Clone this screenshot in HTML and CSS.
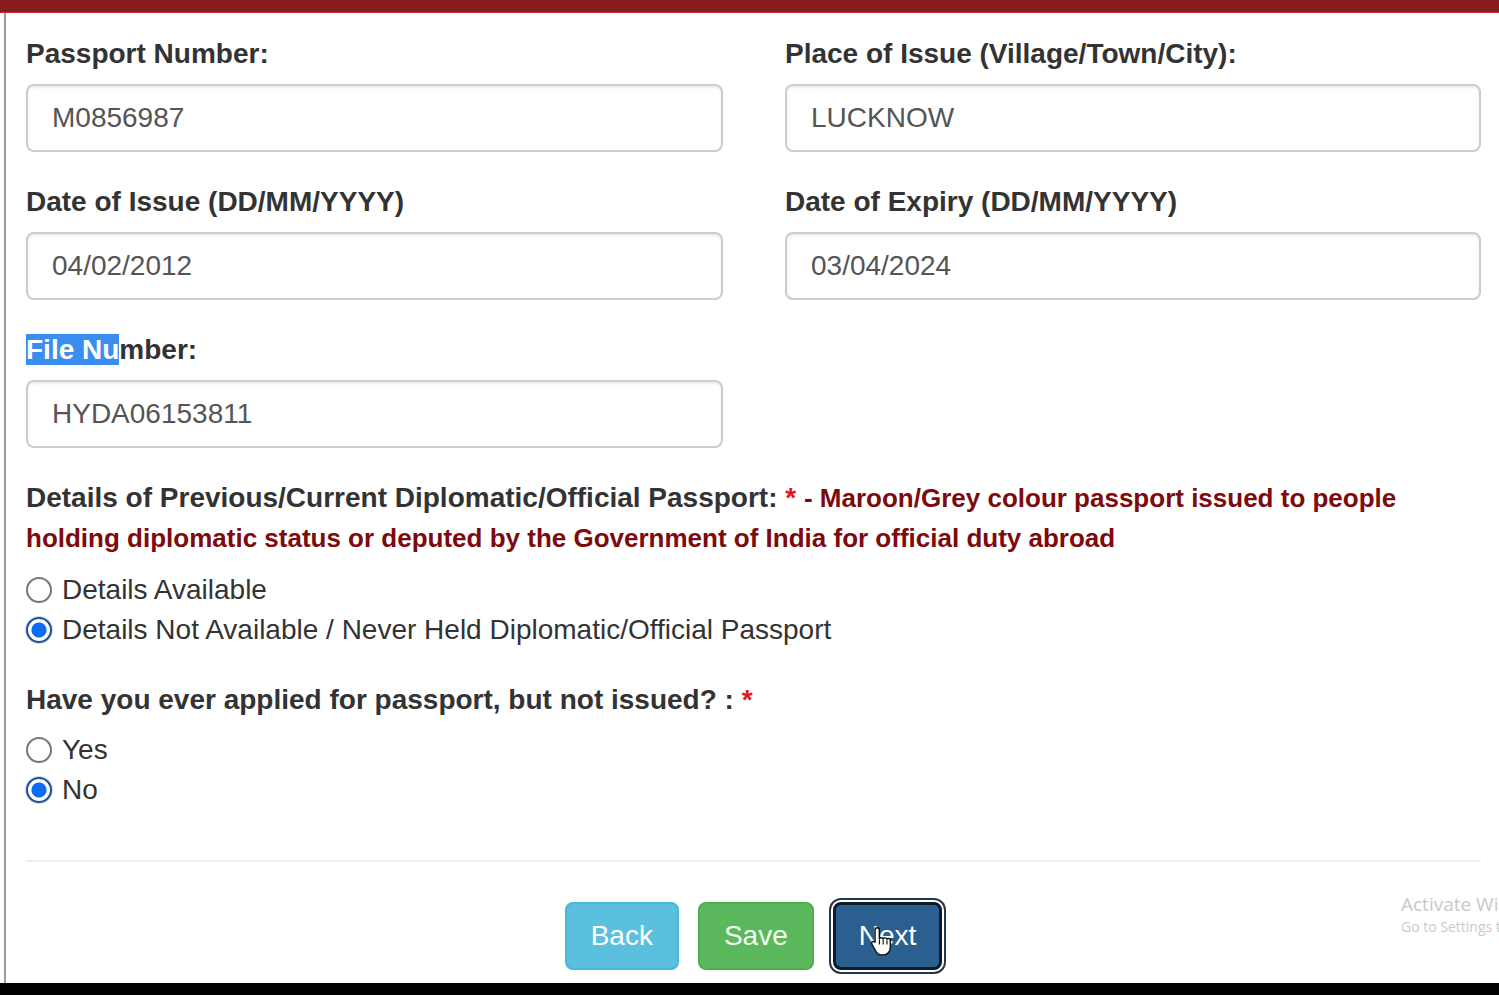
FILE: index.html
```html
<!DOCTYPE html>
<html lang="en">
<head>
<meta charset="utf-8">
<title>Passport Details</title>
<link rel="stylesheet" href="styles.css">
</head>
<body>
<div class="topbar"></div>
<main class="main">
  <div class="grid">
    <div class="group">
      <label class="lbl">Passport Number:</label>
      <div class="input">M0856987</div>
    </div>
    <div class="group">
      <label class="lbl">Place of Issue (Village/Town/City):</label>
      <div class="input">LUCKNOW</div>
    </div>
    <div class="group">
      <label class="lbl">Date of Issue (DD/MM/YYYY)</label>
      <div class="input">04/02/2012</div>
    </div>
    <div class="group">
      <label class="lbl">Date of Expiry (DD/MM/YYYY)</label>
      <div class="input">03/04/2024</div>
    </div>
    <div class="group">
      <label class="lbl"><span class="sel">File Nu</span>mber:</label>
      <div class="input">HYDA06153811</div>
    </div>
  </div>

  <p class="question">Details of Previous/Current Diplomatic/Official Passport: <span class="req">*</span> <span class="note">- Maroon/Grey colour passport issued to people holding diplomatic status or deputed by the Government of India for official duty abroad</span></p>
  <div class="radios first">
    <label class="radio"><span class="dot"></span>Details Available</label>
    <label class="radio"><span class="dot on"></span>Details Not Available / Never Held Diplomatic/Official Passport</label>
  </div>

  <p class="question q2">Have you ever applied for passport, but not issued? : <span class="req">*</span></p>
  <div class="radios">
    <label class="radio"><span class="dot"></span>Yes</label>
    <label class="radio"><span class="dot on"></span>No</label>
  </div>

  <hr class="rule">

  <div class="actions">
    <button class="btn back">Back</button>
    <button class="btn save">Save</button>
    <button class="btn next">Next</button>
  </div>

  <div class="watermark">
    <div class="wm1">Activate Windows</div>
    <div class="wm2">Go to Settings to activate Windows.</div>
  </div>

  <svg class="cursor" width="22" height="30" viewBox="0 0 17 23" aria-hidden="true">
    <path d="M5.5 1.2c1 0 1.7.8 1.7 1.8v6.6c.2-.9 2.8-.9 3 .2.3-1 2.7-1 2.9.3.4-.9 2.6-.7 2.6.7v5.4c0 3.2-2 6-5 6H8.3c-1.6 0-2.6-.8-3.4-2.2L1.5 14c-.8-1.3.5-2.8 1.9-1.9l.4.3.1.1V3c0-1 .7-1.8 1.6-1.8z" fill="#fff" stroke="#111" stroke-width="1.1" stroke-linejoin="round"/>
    <path d="M7.3 10.2v4M10.2 10.4v3.8M13.1 10.9v3.4" stroke="#111" stroke-width="0.9" fill="none"/>
  </svg>
</main>
<div class="bottombar"></div>
</body>
</html>
```

FILE: styles.css
```css
* { box-sizing: border-box; }

html, body {
  margin: 0;
  padding: 0;
  height: 995px;
  overflow: hidden;
  background: #fff;
}

body {
  display: flex;
  flex-direction: column;
  font-family: "Liberation Sans", Arial, Helvetica, sans-serif;
  color: #333;
  font-size: 28px;
  line-height: 40px;
}

.topbar {
  height: 13px;
  flex: 0 0 13px;
  background: #8a1b20;
  border-bottom: 1px solid #c8323a;
}

.bottombar {
  height: 12px;
  flex: 0 0 12px;
  background: #000;
}

.main {
  position: relative;
  flex: 1 1 auto;
  margin-left: 4px;
  border-left: 2px solid #9c9c9c;
  padding: 21px 18px 0 20px;
  overflow: hidden;
}

.grid {
  display: grid;
  grid-template-columns: 697px 696px;
  column-gap: 62px;
}

.group {
  margin-bottom: 30px;
}

.lbl {
  display: block;
  font-weight: bold;
  margin-bottom: 10px;
  line-height: 40px;
}

.sel {
  background: #3a8ef0;
  color: #fff;
}

.input {
  height: 68px;
  border: 2px solid #cccccc;
  border-radius: 8px;
  padding: 12px 24px;
  color: #555;
  line-height: 40px;
  box-shadow: inset 0 2px 2px rgba(0, 0, 0, 0.075);
  background: #fff;
}

.question {
  margin: 0;
  font-weight: bold;
  line-height: 40px;
}

.q2 {
  margin-top: 30px;
}

.req {
  color: #e0191f;
}

.note {
  color: #7d0a0c;
  font-size: 26px;
}

.radios {
  display: flex;
  flex-direction: column;
  margin-top: 10px;
}

.radios.first {
  margin-top: 12px;
}

.radio {
  display: flex;
  align-items: center;
  gap: 10px;
  height: 40px;
  line-height: 40px;
  font-weight: normal;
  color: #333;
}

.dot {
  width: 26px;
  height: 26px;
  flex: 0 0 26px;
  border-radius: 50%;
  border: 2px solid #777;
  background: #fff;
}

.dot.on {
  border: 2px solid #1e4f8c;
  background: radial-gradient(circle, #0a6cf2 0 7px, #ffffff 8px);
  box-shadow: 0 0 0 1px #c6dcf6;
}

.rule {
  margin: 50px 0 40px;
  border: 0;
  border-top: 2px solid #eeeeee;
  height: 0;
}

.actions {
  display: flex;
  justify-content: center;
  gap: 19px;
}

.btn {
  font-family: "Liberation Sans", Arial, Helvetica, sans-serif;
  font-size: 28px;
  line-height: 40px;
  height: 68px;
  padding: 12px 24px;
  border-radius: 8px;
  border: 2px solid transparent;
  color: #fff;
  cursor: pointer;
}

.back {
  background: #5bc0de;
  border-color: #46b8da;
}

.save {
  background: #5cb85c;
  border-color: #4cae4c;
  color: #f2fff0;
}

.next {
  background: #2a5f8f;
  border: 3px solid #0e1b28;
  padding: 11px 23px;
  box-shadow: 0 0 0 2px #fff, 0 0 0 4px #24384c;
}

.watermark {
  position: absolute;
  left: 1395px;
  right: 0;
  top: 879px;
  overflow: hidden;
  font-family: "Open Sans", "Noto Sans", sans-serif;
  color: #c9c9c9;
  white-space: nowrap;
}

.wm1 {
  font-size: 19px;
  line-height: 24px;
}

.wm2 {
  font-size: 14px;
  line-height: 22px;
}

.cursor {
  position: absolute;
  left: 864px;
  top: 913px;
}
```
